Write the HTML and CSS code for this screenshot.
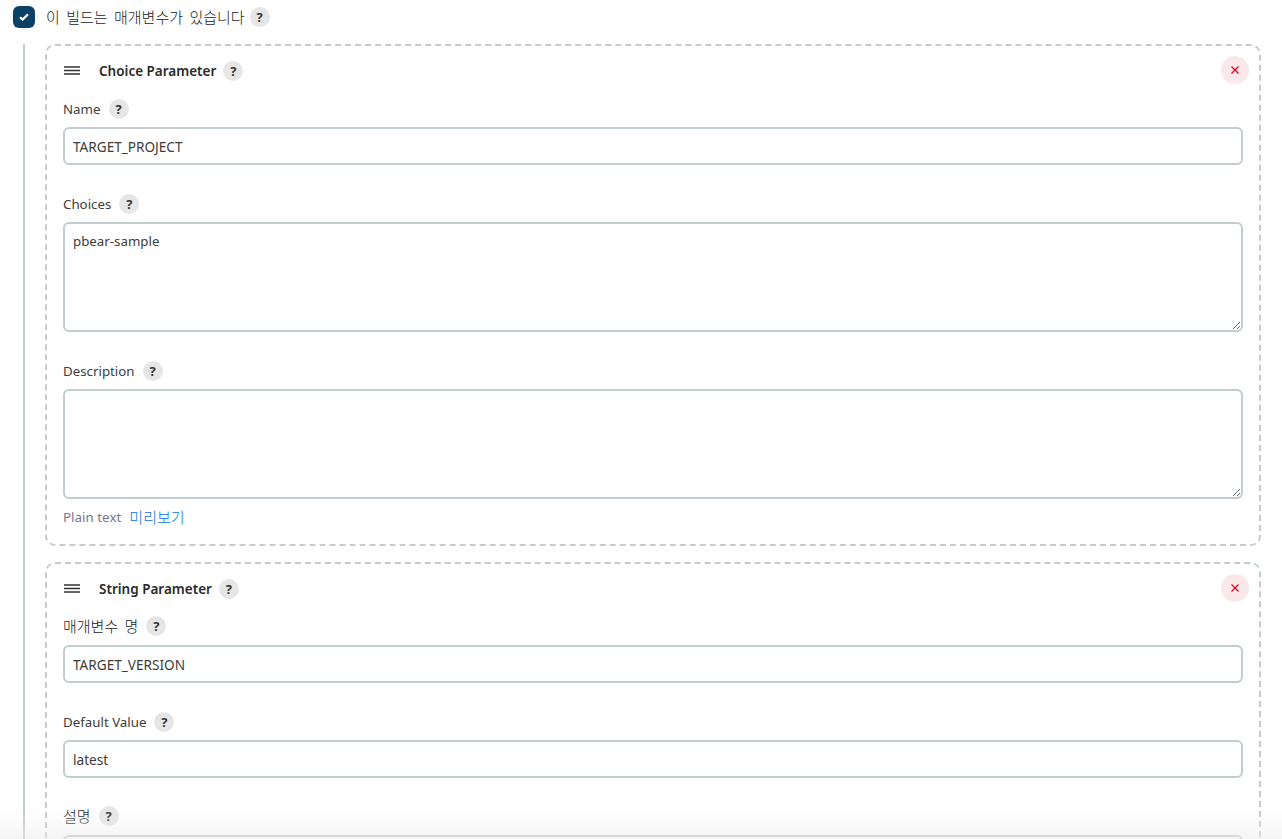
FILE: index.html
```html
<!DOCTYPE html>
<html lang="ko">
<head>
<meta charset="utf-8">
<title>매개변수</title>
<link rel="stylesheet" href="styles.css">
</head>
<body>
<div class="page">
  <div class="check-row">
    <span class="checkbox"><svg width="10" height="8" viewBox="0 0 10 8"><path d="M1 4.2 3.6 6.6 9 1.2" fill="none" stroke="#fff" stroke-width="2.2"/></svg></span>
    <span class="check-label ko-text">이 빌드는 매개변수가 있습니다</span>
    <span class="help">?</span>
  </div>
  <div class="nested">
    <section class="card">
      <div class="card-head">
        <svg class="handle" width="16" height="9" viewBox="0 0 16 9"><path d="M0 1h16M0 4.5h16M0 8h16" stroke="#333" stroke-width="1.4"/></svg>
        <span class="card-title">Choice Parameter</span>
        <span class="help">?</span>
        <button class="close" type="button"><svg width="10" height="10" viewBox="0 0 10 10"><path d="M1.5 1.5l7 7M8.5 1.5l-7 7" stroke="#e6001f" stroke-width="1.2"/></svg></button>
      </div>
      <div class="field">
        <div class="label-row"><span>Name</span><span class="help">?</span></div>
        <input class="text-input" type="text" value="TARGET_PROJECT">
      </div>
      <div class="field">
        <div class="label-row"><span>Choices</span><span class="help">?</span></div>
        <textarea class="text-area">pbear-sample</textarea>
      </div>
      <div class="field">
        <div class="label-row"><span>Description</span><span class="help">?</span></div>
        <textarea class="text-area"></textarea>
        <div class="format-row"><span class="format">Plain text</span><a class="preview ko-text" href="#">미리보기</a></div>
      </div>
    </section>
    <section class="card">
      <div class="card-head">
        <svg class="handle" width="16" height="9" viewBox="0 0 16 9"><path d="M0 1h16M0 4.5h16M0 8h16" stroke="#333" stroke-width="1.4"/></svg>
        <span class="card-title">String Parameter</span>
        <span class="help">?</span>
        <button class="close" type="button"><svg width="10" height="10" viewBox="0 0 10 10"><path d="M1.5 1.5l7 7M8.5 1.5l-7 7" stroke="#e6001f" stroke-width="1.2"/></svg></button>
      </div>
      <div class="field">
        <div class="label-row ko"><span class="ko-text">매개변수 명</span><span class="help">?</span></div>
        <input class="text-input" type="text" value="TARGET_VERSION">
      </div>
      <div class="field">
        <div class="label-row"><span>Default Value</span><span class="help">?</span></div>
        <input class="text-input" type="text" value="latest">
      </div>
      <div class="field">
        <div class="label-row ko"><span class="ko-text">설명</span><span class="help">?</span></div>
        <textarea class="text-area"></textarea>
      </div>
    </section>
  </div>
</div>
<div class="bottom-fade"></div>
</body>
</html>
```
FILE: styles.css
```css
* { box-sizing: border-box; }
html, body { margin: 0; height: 100%; overflow: hidden; background: #fff; }
body {
  font-family: "Noto Sans", "Noto Sans CJK KR", sans-serif;
  font-size: 13.3px;
  color: #3d3d3d;
}
.page { height: 839px; overflow: hidden; padding-top: 6px; }
.ko-text { font-size: 15px; font-weight: 300; word-spacing: 2.5px; line-height: 20px; color: #222; }
.check-row { display: flex; align-items: center; height: 22px; padding-left: 13px; }
.checkbox {
  width: 22px; height: 22px; border-radius: 6px; background: #0b4164;
  display: flex; align-items: center; justify-content: center; margin-right: 11px;
}
.check-label { margin-right: 5px; }
.help {
  flex: none; width: 20px; height: 20px; border-radius: 50%; background: #e6e6e6;
  color: #333; font-size: 13px; font-weight: 700; line-height: 20px; text-align: center;
}
.nested {
  margin: 16px 0 0 23px; padding-left: 20px; border-left: 2px solid #c3ccd1; width: 1238px;
}
.card {
  border: 2px dashed #c3ccd1; border-radius: 10px; padding: 0 16px; margin-bottom: 16px; width: 1216px;
}
.card-head { display: flex; align-items: center; height: 53px; padding: 0 0 4px 1px; }
.handle { margin-right: 19px; }
.card-title { font-size: 13.5px; font-weight: 600; margin-right: 7px; padding-top: 1px; color: #2a2a2a; }
.close {
  margin-left: auto; margin-right: -6px; width: 28px; height: 28px; border: 0; padding: 0; border-radius: 50%;
  background: #fbe8ea; display: flex; align-items: center; justify-content: center; position: relative; top: -1px;
}
.field { margin-bottom: 29px; }
.field:last-child { margin-bottom: 0; }
.label-row { display: flex; align-items: center; gap: 8px; height: 20px; margin-bottom: 8px; }
.label-row.ko { height: 21px; margin-top: -1px; align-items: flex-start; }
.text-input, .text-area {
  display: block; width: 100%; border: 2px solid #c3ccd1; border-radius: 6px; background: #fff;
  font-family: inherit; color: #3d3d3d; padding: 0 8px; outline: none;
}
.text-input { height: 38px; font-size: 13.6px; }
.text-area { height: 110px; font-size: 13.3px; padding-top: 8px; padding-bottom: 8px; resize: vertical; }
.format-row { display: flex; align-items: center; gap: 8px; height: 20px; margin-top: 8px; margin-bottom: 17px; }
.format { color: #77778f; font-size: 13.4px; }
.preview { color: #0b6fe6; text-decoration: none; }
.bottom-fade {
  position: fixed; left: 0; right: 0; bottom: 0; height: 30px; pointer-events: none;
  background: linear-gradient(to bottom, rgba(235,235,235,0), rgba(235,235,235,.5));
}
```
